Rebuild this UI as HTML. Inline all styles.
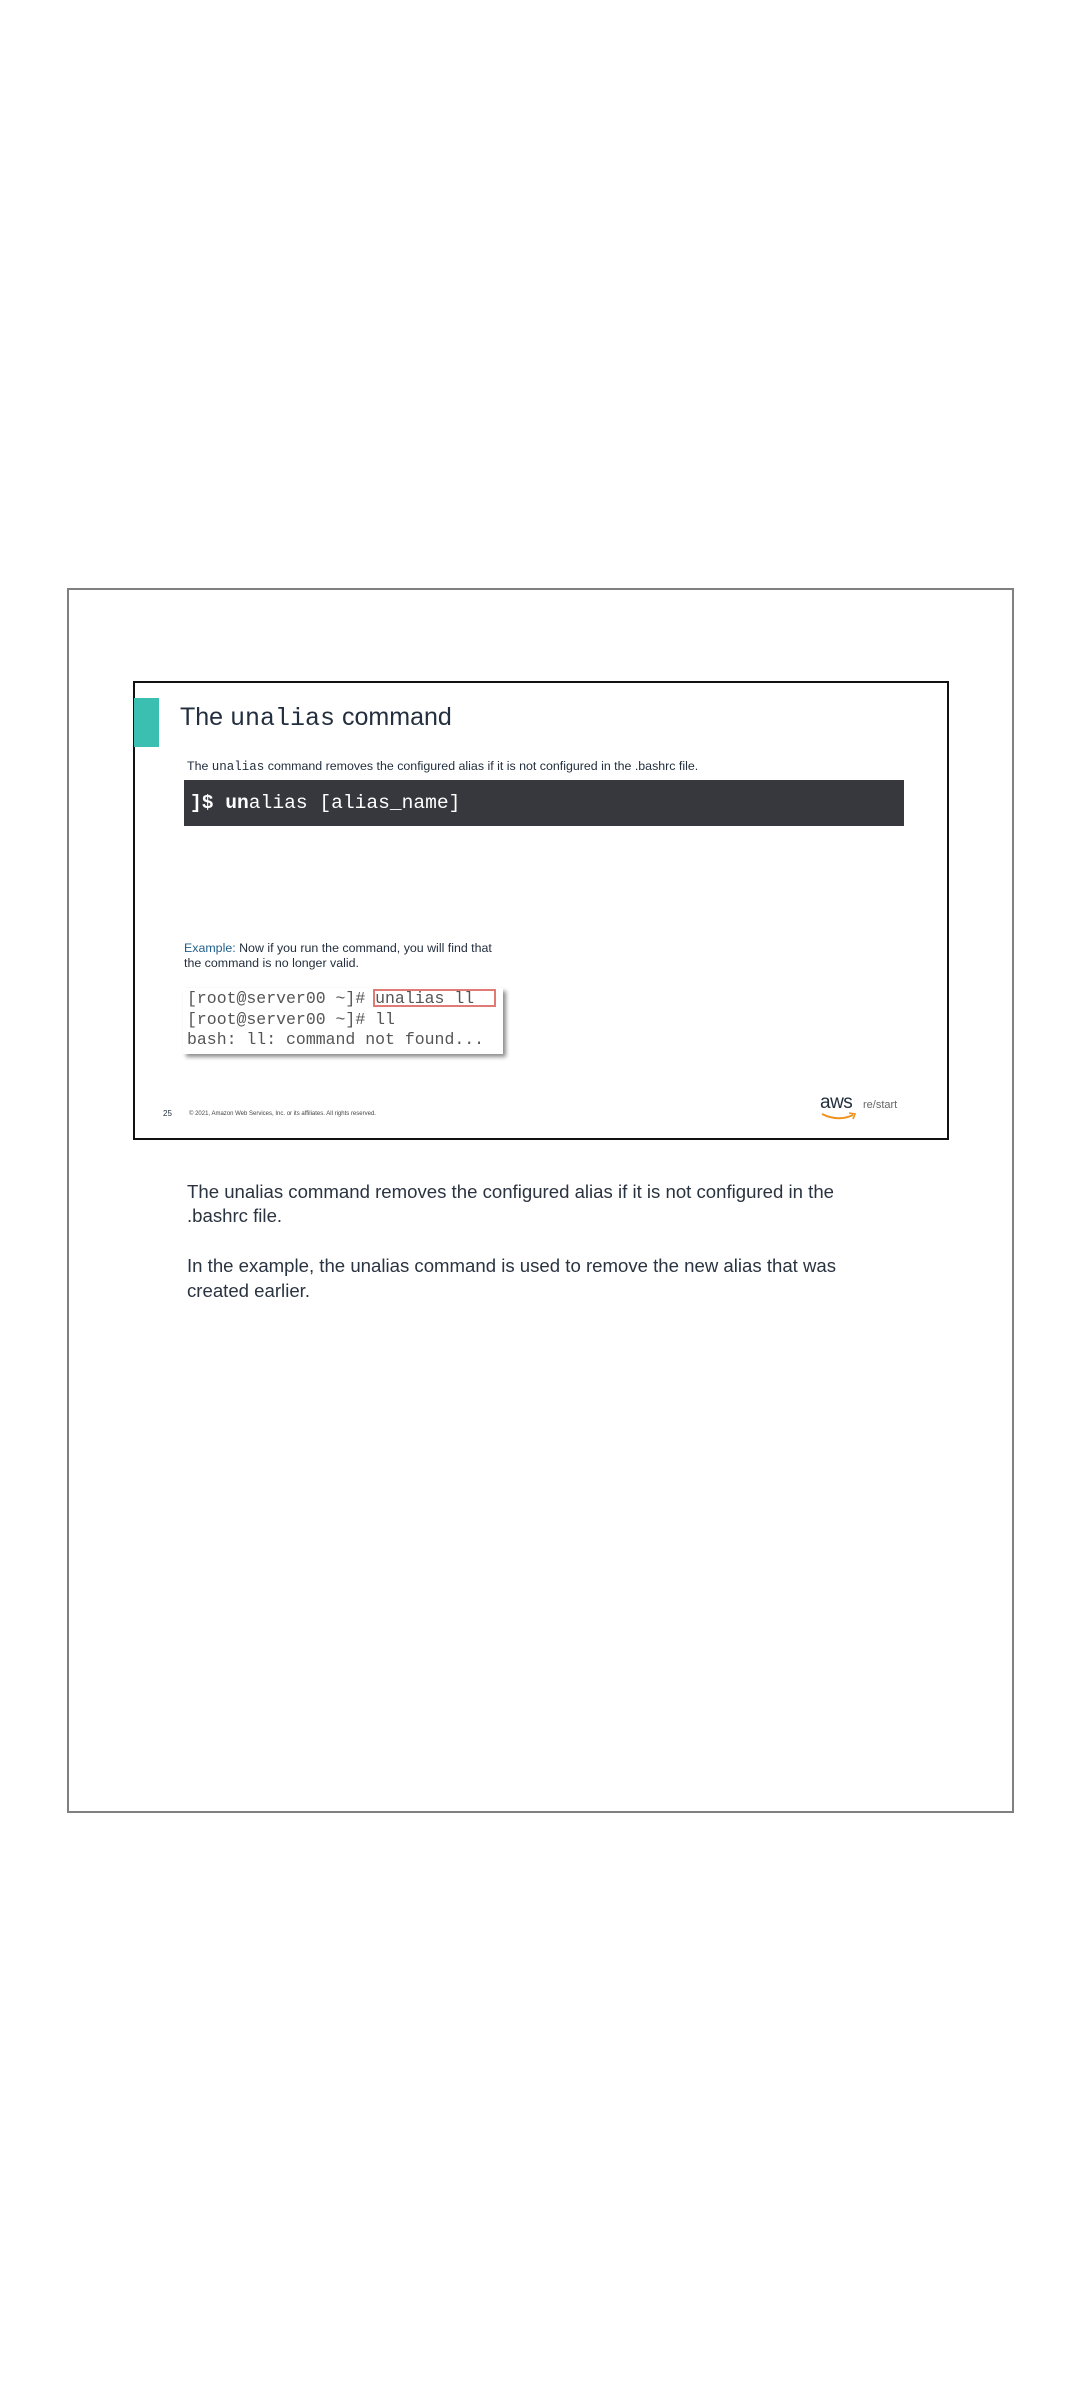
<!DOCTYPE html>
<html><head><meta charset="utf-8"><style>
*{margin:0;padding:0;box-sizing:border-box}
body{width:1080px;height:2400px;background:#fff;position:relative;overflow:hidden;font-family:"Liberation Sans",sans-serif}
.abs{position:absolute;white-space:nowrap}
.mono{font-family:"Liberation Mono","DejaVu Sans Mono",monospace}
</style></head><body>
<div class="abs" style="left:67px;top:588px;width:947px;height:1225px;border:2px solid #808080"></div>
<div class="abs" style="left:133px;top:681px;width:816px;height:459px;border:2px solid #111"></div>
<div class="abs" style="left:134px;top:698px;width:25px;height:49px;background:#3bbfb0"></div>
<div class="abs" style="left:180px;top:703px;font-size:25px;color:#232f3e;line-height:28px">The <span class="mono" style="font-size:25px">unalias</span> command</div>
<div class="abs" style="left:187px;top:759px;font-size:12.4px;color:#232f3e;line-height:14px">The <span class="mono" style="font-size:12.5px">unalias</span> command removes the configured alias if it is not configured in the .bashrc file.</div>
<div class="abs" style="left:184px;top:780px;width:720px;height:46px;background:#37383d"></div>
<div class="abs mono" style="left:190px;top:791px;font-size:19.6px;color:#fff;line-height:24px"><b>]$ un</b>alias [alias_name]</div>
<div class="abs" style="left:184px;top:941px;font-size:12.4px;color:#232f3e;line-height:15px"><span style="color:#1f5f8a">Example:</span> Now if you run the command, you will find that<br>the command is no longer valid.</div>
<div class="abs" style="left:183px;top:988px;width:320px;height:66px;background:#fff;box-shadow:3px 3px 4px rgba(0,0,0,.45)"></div>
<div class="abs" style="left:373px;top:989px;width:123px;height:18px;border:2px solid #e07a72"></div>
<div class="abs mono" style="left:187px;top:989px;font-size:16.5px;color:#555;line-height:20.5px">[root@server00 ~]# unalias ll<br>[root@server00 ~]# ll<br>bash: ll: command not found...</div>
<div class="abs" style="left:163px;top:1109px;font-size:8px;color:#232f3e">25</div>
<div class="abs" style="left:189px;top:1111px;font-size:6px;color:#444">© 2021, Amazon Web Services, Inc. or its affiliates. All rights reserved.</div>
<div class="abs" style="left:820px;top:1093px;font-size:19px;color:#232f3e;letter-spacing:-0.5px;line-height:20px">aws</div>
<svg class="abs" style="left:820px;top:1111px" width="40" height="12"><path d="M2 3 Q18 11 33 4" stroke="#f0921d" stroke-width="2" fill="none"/><path d="M29 2 L35 3 L33 8" stroke="#f0921d" stroke-width="1.6" fill="none"/></svg>
<div class="abs" style="left:863px;top:1099px;font-size:11px;color:#666">re/start</div>
<div class="abs" style="left:187px;top:1180px;font-size:18.6px;color:#2a3340;line-height:24px">The unalias command removes the configured alias if it is not configured in the<br>.bashrc file.</div>
<div class="abs" style="left:187px;top:1253px;font-size:18.6px;color:#2a3340;line-height:25px">In the example, the unalias command is used to remove the new alias that was<br>created earlier.</div>
</body></html>
